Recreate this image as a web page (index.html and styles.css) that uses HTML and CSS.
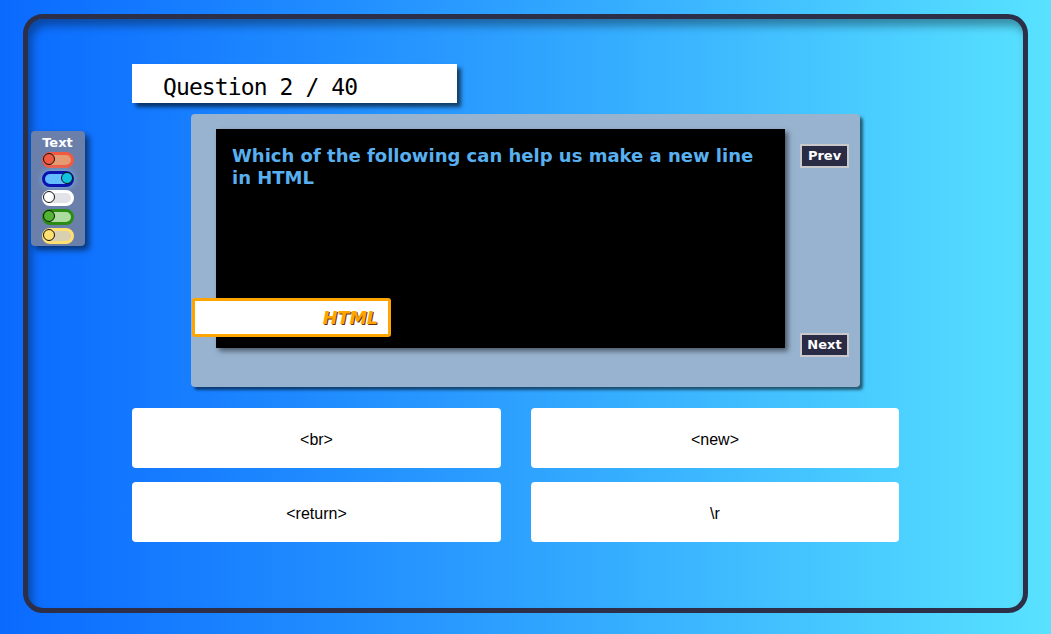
FILE: index.html
```html
<!DOCTYPE html>
<html>
<head>
<meta charset="utf-8">
<link rel="stylesheet" href="styles.css">
</head>
<body>
<div class="frame">
  <aside class="sidebar">
    <div class="toggles">
      <div class="toggles-title">Text</div>
      <div class="toggle t-red"><span class="knob"></span></div>
      <div class="toggle t-blue on"><span class="knob"></span></div>
      <div class="toggle t-white"><span class="knob"></span></div>
      <div class="toggle t-green"><span class="knob"></span></div>
      <div class="toggle t-yellow"><span class="knob"></span></div>
    </div>
  </aside>
  <main class="main">
    <div class="qnum">Question 2 / 40</div>
    <section class="panel">
      <div class="screen">
        <p class="qtext">Which of the following can help us make a new line in HTML</p>
      </div>
      <div class="navs">
        <button class="nav">Prev</button>
        <button class="nav">Next</button>
      </div>
      <div class="tag">HTML</div>
    </section>
    <div class="answers">
      <div class="answer">&lt;br&gt;</div>
      <div class="answer">&lt;new&gt;</div>
      <div class="answer">&lt;return&gt;</div>
      <div class="answer">\r</div>
    </div>
  </main>
</div>
</body>
</html>
```
FILE: styles.css
```css
html, body {
  margin: 0;
  padding: 0;
  height: 100%;
}
body {
  background: linear-gradient(to right, #0a6aff 0%, #2a9cff 45%, #58e2ff 100%);
  font-family: "DejaVu Sans", sans-serif;
  overflow: hidden;
}
.frame {
  box-sizing: border-box;
  margin: 14px 23px 0 23px;
  height: 599px;
  border: 5px solid #2d2e48;
  border-radius: 20px;
  box-shadow: inset 4px 7px 9px rgba(0, 0, 0, 0.35);
  display: flex;
  padding-left: 3px;
}
.sidebar {
  padding-top: 112px;
  width: 54px;
}
.toggles {
  background: #6b7fab;
  border-radius: 4px;
  box-shadow: 4px 4px 6px rgba(0, 0, 0, 0.55);
  height: 115px;
  box-sizing: border-box;
  padding-top: 4px;
  display: flex;
  flex-direction: column;
  align-items: center;
  gap: 3px;
}
.toggles-title {
  color: #fff;
  font-weight: bold;
  font-size: 13px;
  line-height: 15px;
  margin-left: -1px;
  margin-bottom: -1px;
}
.toggle {
  box-sizing: border-box;
  width: 32px;
  height: 16px;
  border-radius: 8px;
  border: 3px solid;
  position: relative;
  margin-left: -1px;
}
.knob {
  position: absolute;
  top: -2px;
  left: -2px;
  width: 12px;
  height: 12px;
  box-sizing: border-box;
  border-radius: 50%;
  border: 1px solid #111;
}
.toggle.on .knob {
  left: auto;
  right: -2px;
}
.t-red { border-color: #f05a40; background: #e69a72; }
.t-red .knob { background: #f05a40; }
.t-blue { border-color: #0a12b0; background: #62bcff; box-shadow: 0 0 6px rgba(120, 200, 255, 0.8); }
.t-blue .knob { background: #10c2e0; }
.t-white { border-color: #ffffff; background: #e2e3e8; }
.t-white .knob { background: #ffffff; }
.t-green { border-color: #2a8c12; background: #acdc9e; }
.t-green .knob { background: #52b432; }
.t-yellow { border-color: #ffe070; background: #d8d0b0; }
.t-yellow .knob { background: #ffe070; }

.main {
  margin-left: 47px;
  padding-top: 45px;
  display: flex;
  flex-direction: column;
  align-items: flex-start;
}
.qnum {
  width: 325px;
  height: 39px;
  box-sizing: border-box;
  background: #fff;
  box-shadow: 4px 4px 4px rgba(0, 0, 0, 0.6);
  padding-left: 31px;
  font-family: "DejaVu Sans Mono", monospace;
  font-size: 23px;
  line-height: 46px;
  color: #000;
  letter-spacing: -0.9px;
  overflow: hidden;
}
.panel {
  position: relative;
  margin-top: 11px;
  margin-left: 59px;
  width: 669px;
  height: 273px;
  box-sizing: border-box;
  background: #98b3cf;
  border-radius: 4px;
  box-shadow: 3px 3px 3px rgba(0, 0, 0, 0.55);
  padding: 15px 0 0 25px;
  display: flex;
  align-items: flex-start;
}
.screen {
  width: 569px;
  height: 219px;
  box-sizing: border-box;
  background: #000;
  box-shadow: 3px 3px 5px rgba(0, 0, 0, 0.5);
  padding: 16px 16px 0 16px;
}
.qtext {
  margin: 0;
  color: #58b0f0;
  font-weight: bold;
  font-size: 18px;
  line-height: 22px;
}
.navs {
  margin-left: 15px;
  margin-top: 15px;
  height: 213px;
  display: flex;
  flex-direction: column;
  justify-content: space-between;
}
.nav {
  width: 49px;
  height: 24px;
  padding: 0;
  background: #2a2b45;
  border: 2px solid #c9c9cc;
  color: #fff;
  font-family: "DejaVu Sans", sans-serif;
  font-weight: bold;
  font-size: 13px;
  line-height: 18px;
}
.tag {
  position: absolute;
  left: 1px;
  top: 184px;
  width: 199px;
  height: 39px;
  box-sizing: border-box;
  background: #fff;
  border: 3px solid #ffa500;
  border-radius: 3px;
  text-align: right;
  padding-right: 10px;
  color: #ffa500;
  font-style: italic;
  font-weight: bold;
  font-size: 17.5px;
  line-height: 34px;
  text-shadow: 1px 1px 0 #6a3010;
}
.answers {
  margin-top: 21px;
  display: grid;
  grid-template-columns: 369px 368px;
  grid-auto-rows: 60px;
  column-gap: 30px;
  row-gap: 14px;
}
.answer {
  background: #fff;
  border-radius: 4px;
  display: flex;
  align-items: center;
  justify-content: center;
  padding-top: 3px;
  box-sizing: border-box;
  font-family: "Liberation Sans", Arial, sans-serif;
  font-size: 16px;
  color: #000;
}
```
